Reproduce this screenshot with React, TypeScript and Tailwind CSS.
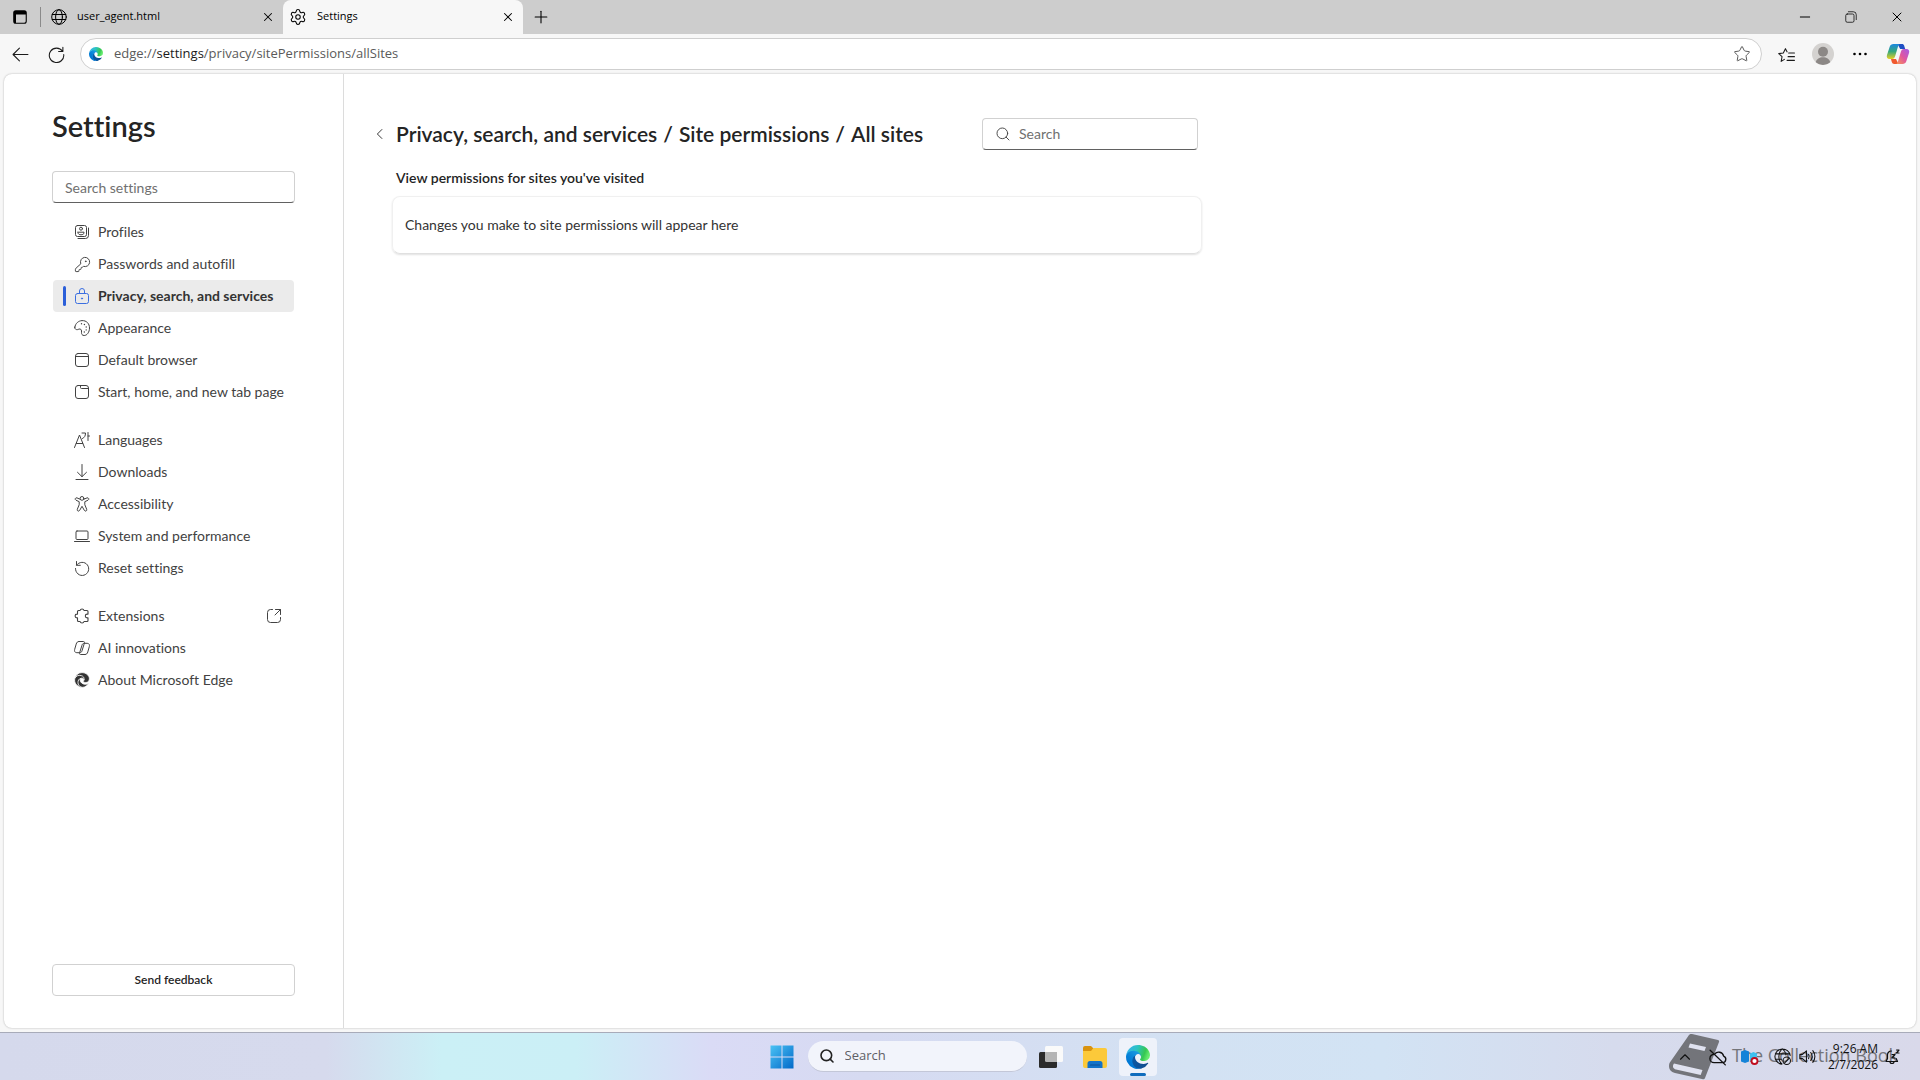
import { useState, type ReactNode } from "react";
import { KeyRound, Minus, Plus, Search, Settings, Star, X } from "lucide-react";
import clsx from "clsx";

type IconProps = { className?: string };

// 16px outline icon base
function Icon({ className, children }: IconProps & { children: ReactNode }) {
  return (
    <svg
      viewBox="0 0 16 16"
      fill="none"
      stroke="currentColor"
      strokeWidth={1}
      strokeLinecap="round"
      strokeLinejoin="round"
      className={clsx("shrink-0", className ?? "size-4")}
      aria-hidden="true"
    >
      {children}
    </svg>
  );
}

const ProfilesIcon = () => (
  <Icon>
    <rect x="1.5" y="1.5" width="11" height="11" rx="2" />
    <circle cx="7" cy="4.7" r="1.5" />
    <path d="M4 8.2h6v.6c0 1.3-1.3 2-3 2s-3-.7-3-2z" />
    <path d="M14.5 4v7.5a3 3 0 0 1-3 3H4" />
  </Icon>
);

const KeyIcon = () => <KeyRound className="size-[17px] shrink-0" strokeWidth={1.4} />;

const LockIcon = () => (
  <Icon>
    <rect x="1.5" y="5.5" width="13" height="10" rx="2" />
    <path d="M5.5 5.5V3a2.5 2.5 0 0 1 5 0v2.5" />
    <circle cx="8" cy="10.5" r=".6" fill="currentColor" />
  </Icon>
);

const PaletteIcon = () => (
  <Icon>
    <path d="M.8 7.2C1.5 3 4.7.8 8 .6c4.500-.2 7.500 3 7.500 7.400 0 4.200-2.500 7.500-5.300 7.500-2.200 0-2.800-1.500-2.700-3.200.2-2-.3-3.100-1.500-3.300-1.400-.2-2.300 1-3.500.6C1.200 9.300.6 8.400.8 7.200z" />
    <g fill="currentColor" stroke="none">
      <circle cx="7.5" cy="3.7" r=".7" />
      <circle cx="10.4" cy="4.5" r=".7" />
      <circle cx="12.2" cy="7" r=".7" />
      <circle cx="12.2" cy="9.9" r=".7" />
      <circle cx="10.3" cy="12" r=".7" />
    </g>
  </Icon>
);

const BrowserIcon = () => (
  <Icon>
    <rect x="1.5" y="1.5" width="13" height="13" rx="2.5" />
    <path d="M1.5 4.5h13" />
  </Icon>
);

const TabPageIcon = () => (
  <Icon>
    <rect x="1.5" y="1.5" width="13" height="13" rx="2.5" />
    <path d="M6.5 1.5v2a1 1 0 0 0 1 1h7" />
  </Icon>
);

const LanguagesIcon = () => (
  <Icon>
    <path d="M.5 15.5 5.5 3l5 12.500M2.300 11.500h6.400M8 1h3.500c0 3-1 4.500-3 5.500M14 .5v8M14 4h1.500" />
  </Icon>
);

const DownloadIcon = () => (
  <Icon>
    <path d="M8 .5v12M3.500 8.300 8 12.700l4.500-4.400M2 15.500h12" />
  </Icon>
);

const AccessibilityIcon = () => (
  <Icon>
    <circle cx="8" cy="2.4" r="1.9" />
    <path d="M6.200 3.300 3 1.900c-1.700-.6-2.500 1.600-1 2.300L5.200 5.700v3L3.300 13.300c-.6 1.700 1.600 2.600 2.400 1L8 10.300l2.300 4c.8 1.600 3 .7 2.400-1l-1.900-4.600v-3L14 4.200c1.500-.7.7-2.900-1-2.300L9.800 3.300" />
  </Icon>
);

const LaptopIcon = () => (
  <Icon>
    <rect x="2" y="3" width="12" height="8.5" rx="1" />
    <path d="M.5 13.500h15" />
  </Icon>
);

const ResetIcon = () => (
  <Icon>
    <path d="M2.500 1.500v3.800h3.800M2.600 5.200A6.600 6.600 0 1 1 1.500 8.500" />
  </Icon>
);

const PuzzleIcon = () => (
  <Icon>
    <path
      strokeWidth="1.1"
      d="M4.500 2.500h1.600a2 2 0 0 1 3.900 0H13a1 1 0 0 1 1 1v2.600h-.8a1.900 1.900 0 0 0 0 3.800h.8v2.600a1 1 0 0 1-1 1h-3a2 2 0 0 1-3.900 0H4.500a1 1 0 0 1-1-1V9.900H3a1.900 1.900 0 0 1 0-3.800h.5V3.500a1 1 0 0 1 1-1z"
    />
  </Icon>
);

const CopilotOutline = () => (
  <Icon>
    <path d="M5 1.500h4.500c.8 0 1.200.6 1 1.300L8 10.800c-.4 1.300-1 1.900-2.300 1.900H2.800C.8 12.700.2 11 .7 9.300l1.500-5.200C2.700 2.300 3.500 1.500 5 1.500z" />
    <path d="M11 14.500H6.500c-.8 0-1.200-.6-1-1.300L8 5.200c.4-1.300 1-1.900 2.300-1.900h2.900c2 0 2.600 1.700 2.100 3.400l-1.500 5.200c-.5 1.800-1.300 2.600-2.800 2.600z" />
  </Icon>
);

const OpenIcon = () => (
  <Icon className="mr-1 size-4">
    <path d="M6.500 1.500h-2a3 3 0 0 0-3 3v7a3 3 0 0 0 3 3h7a3 3 0 0 0 3-3v-2M9.500 1.500h5v5M14.500 1.500 9 7" />
  </Icon>
);

const EDGE_BASE =
  "M231 190.500c-3.400 1.800-6.900 3.400-10.500 4.700a101.700 101.700 0 0 1-35.900 6.400c-47.300 0-88.500-32.500-88.500-74.300a31.500 31.500 0 0 1 16.400-27.300c-42.800 1.800-53.800 46.400-53.800 72.500 0 73.900 68.100 81.400 82.800 81.400 7.900 0 19.800-2.300 27-4.500l1.300-.5a128.300 128.300 0 0 0 66.600-52.800 4 4 0 0 0-5.400-5.600z";
const EDGE_LEFT =
  "M105.700 241.400a79.200 79.200 0 0 1-22.700-21.300 80.700 80.700 0 0 1 29.500-120c3.200-1.500 8.500-4.100 15.600-4a32.400 32.400 0 0 1 25.700 13 31.900 31.900 0 0 1 6.300 18.700c0-.2 24.500-79.600-80-79.600-43.900 0-80 41.700-80 78.200a130.200 130.200 0 0 0 12.100 56 128 128 0 0 0 156.400 67.100 75.500 75.500 0 0 1-62.800-8z";
const EDGE_TOP =
  "M152.300 148.900c-.9 1-3.400 2.500-3.400 5.600 0 2.600 1.700 5.100 4.700 7.300 14.400 10 41.500 8.700 41.600 8.700a59.600 59.600 0 0 0 30.200-8.300 61.400 61.400 0 0 0 30.400-52.900c.3-22.400-8-37.300-11.300-43.900C223.500 23.800 177.700 0 128 0A128 128 0 0 0 0 126.200c.5-36.500 36.800-66 80-66 3.500 0 23.500.3 42 10a72.600 72.600 0 0 1 30.900 29.300c6.100 10.600 7.200 24.100 7.200 29.500s-2.700 13.300-7.800 19.900z";

const EdgeMono = () => (
  <svg viewBox="-10 -10 276 276" className="size-4 shrink-0" fill="#333" stroke="#fff" strokeWidth={14} aria-hidden="true">
    <path d={EDGE_TOP} />
    <path d={EDGE_LEFT} />
    <path d={EDGE_BASE} />
  </svg>
);

function EdgeLogo({ className, id }: { className: string; id: string }) {
  return (
    <svg viewBox="0 0 256 256" className={className} aria-hidden="true">
      <defs>
        <linearGradient id={`${id}-a`} x1="63" y1="84" x2="242" y2="84" gradientUnits="userSpaceOnUse">
          <stop offset="0" stopColor="#0c59a4" />
          <stop offset="1" stopColor="#114a8b" />
        </linearGradient>
        <linearGradient id={`${id}-b`} x1="157" y1="90" x2="46" y2="210" gradientUnits="userSpaceOnUse">
          <stop offset="0" stopColor="#1b9de2" />
          <stop offset=".67" stopColor="#0680d7" />
          <stop offset="1" stopColor="#0078d4" />
        </linearGradient>
        <linearGradient id={`${id}-c`} x1="20" y1="40" x2="235" y2="120" gradientUnits="userSpaceOnUse">
          <stop offset="0" stopColor="#35b4e8" />
          <stop offset=".4" stopColor="#2bc3c2" />
          <stop offset=".8" stopColor="#36c752" />
          <stop offset="1" stopColor="#66eb6e" />
        </linearGradient>
      </defs>
      <path d={EDGE_BASE} fill={`url(#${id}-a)`} />
      <path d={EDGE_LEFT} fill={`url(#${id}-b)`} />
      <path d={EDGE_TOP} fill={`url(#${id}-c)`} />
    </svg>
  );
}

function CopilotLogo() {
  return (
    <svg viewBox="0 0 24 24" className="size-6" aria-hidden="true">
      <defs>
        <linearGradient id="cp-l" x1="0" y1="0" x2="0" y2="1">
          <stop offset="0" stopColor="#1a86e0" />
          <stop offset=".5" stopColor="#35a87c" />
          <stop offset="1" stopColor="#e8d022" />
        </linearGradient>
        <linearGradient id="cp-r" x1="1" y1="0" x2="0" y2="1">
          <stop offset="0" stopColor="#a45be8" />
          <stop offset=".5" stopColor="#e0559f" />
          <stop offset="1" stopColor="#fa9a4f" />
        </linearGradient>
      </defs>
      <path d="M11.500 2H16c1.200 0 1.800.6 2.200 1.800l1 3.200h-5z" fill="#1f4fc4" />
      <path d="M12.500 22H8.200c-1.300 0-2-.7-2.400-2l-.8-3h5z" fill="#f0592f" />
      <path d="M7.500 2H14c-1 .3-1.500 1-1.900 2.300L9.200 14c-.6 2-1.400 3-3.200 3H3.500C1.200 17 .3 15.200 1 13L3.700 4.800C4.300 3 5.500 2 7.500 2z" fill="url(#cp-l)" />
      <path d="M16.500 22H10c1-.3 1.500-1 1.900-2.300L14.800 10c.6-2 1.400-3 3.200-3h2.500c2.300 0 3.200 1.800 2.500 4l-2.700 8.200c-.6 1.800-1.800 2.800-3.800 2.800z" fill="url(#cp-r)" />
    </svg>
  );
}

const GlobePaths = () => (
  <>
    <circle cx="8" cy="8" r="7.3" />
    <ellipse cx="8" cy="8" rx="3.4" ry="7.3" />
    <path d="M1.300 5.500h13.400M1.300 10.500h13.400" />
  </>
);

type NavItem = { label: string; icon: ReactNode; external?: boolean };

const NAV: NavItem[][] = [
  [
    { label: "Profiles", icon: <ProfilesIcon /> },
    { label: "Passwords and autofill", icon: <KeyIcon /> },
    { label: "Privacy, search, and services", icon: <LockIcon /> },
    { label: "Appearance", icon: <PaletteIcon /> },
    { label: "Default browser", icon: <BrowserIcon /> },
    { label: "Start, home, and new tab page", icon: <TabPageIcon /> },
  ],
  [
    { label: "Languages", icon: <LanguagesIcon /> },
    { label: "Downloads", icon: <DownloadIcon /> },
    { label: "Accessibility", icon: <AccessibilityIcon /> },
    { label: "System and performance", icon: <LaptopIcon /> },
    { label: "Reset settings", icon: <ResetIcon /> },
  ],
  [
    { label: "Extensions", icon: <PuzzleIcon />, external: true },
    { label: "AI innovations", icon: <CopilotOutline /> },
    { label: "About Microsoft Edge", icon: <EdgeMono /> },
  ],
];

function TabStrip() {
  return (
    <header className="flex h-[34px] shrink-0 items-center bg-[#cdcdcd] pb-px text-[11px] text-black">
      <button type="button" aria-label="Tab actions" className="flex w-10 justify-center">
        <svg viewBox="0 0 14 14" className="size-3.5" aria-hidden="true">
          <rect x=".75" y=".75" width="12.5" height="12.5" rx="2" fill="none" stroke="#000" strokeWidth="1.1" />
          <path d="M1 1h12v3.500H1zM1 4h2v9H1z" />
        </svg>
      </button>
      <div className="flex h-full w-[243px] items-center">
        <span className="h-5 w-px bg-[#8a8a8a]" />
        <Icon className="ml-2.5 size-4">
          <GlobePaths />
        </Icon>
        <span className="ml-2.5 flex-1">user_agent.html</span>
        <button type="button" aria-label="Close user_agent.html" className="mr-2">
          <X className="size-3.5" strokeWidth={1.8} />
        </button>
      </div>
      <div className="-mb-px flex h-[34px] w-[240px] items-center rounded-t-lg bg-[#f7f7f7] pb-px pl-1.5">
        <Settings className="size-[18px]" strokeWidth={1.4} />
        <span className="ml-2.5 flex-1">Settings</span>
        <button type="button" aria-label="Close Settings" className="mr-2">
          <X className="size-3.5" strokeWidth={1.8} />
        </button>
      </div>
      <button type="button" aria-label="New tab" className="ml-2">
        <Plus className="size-5" strokeWidth={1.3} />
      </button>
      <div className="ml-auto flex">
        <button type="button" aria-label="Minimize" className="flex w-[46px] justify-center">
          <Minus className="size-4" strokeWidth={1.5} />
        </button>
        <button type="button" aria-label="Restore" className="flex w-[46px] items-center justify-center">
          <Icon className="size-3">
            <rect x="1" y="4" width="11" height="11" rx="2" />
            <path d="M4.500 1H11a4 4 0 0 1 4 4v6.500" />
          </Icon>
        </button>
        <button type="button" aria-label="Close" className="flex w-[46px] justify-center">
          <X className="size-4" strokeWidth={1.5} />
        </button>
      </div>
    </header>
  );
}

function Toolbar() {
  return (
    <div className="flex h-10 shrink-0 items-center px-2.5 text-[#1b1b1b]">
      <button type="button" aria-label="Back" className="flex w-5 justify-center">
        <Icon className="size-[17px]">
          <path d="M15 8H1M7 2 1 8l6 6" />
        </Icon>
      </button>
      <button type="button" aria-label="Refresh" className="ml-4 flex w-5 justify-center">
        <Icon className="size-[17px]">
          <path d="M14 1.200v4h-4M13.700 5A6.800 6.800 0 1 0 14.800 8" />
        </Icon>
      </button>
      <div className="ml-3.5 flex h-8 flex-1 items-center rounded-full border border-[#cfcfcf] bg-white pr-2.5 pl-2">
        <EdgeLogo id="edge-url" className="size-3.5" />
        <div className="ml-[11px] flex-1 text-[13px] text-[#5a5a5a]">
          edge://<span className="text-[#1b1b1b]">settings</span>/privacy/sitePermissions/allSites
        </div>
        <button type="button" aria-label="Add this page to favorites">
          <Star className="size-[18px] text-[#555]" strokeWidth={1.3} />
        </button>
      </div>
      <div className="ml-3 flex items-center gap-3">
        <button type="button" aria-label="Favorites" className="ml-0.5 flex w-5 justify-center">
          <Icon className="size-[17px]">
            <path d="M6 12.600 3 14.500l.8-4.400L.7 7.200l4.300-.6L7 2.500l1.500 3M10 6.500h5.500M9.500 10h6M8.500 13.500h7" />
          </Icon>
        </button>
        <button type="button" aria-label="Profile" className="ml-1">
          <svg viewBox="0 0 22 22" className="size-[22px]" aria-hidden="true">
            <circle cx="11" cy="11" r="11" fill="#d4d2d0" />
            <circle cx="11" cy="8.7" r="5" fill="#8c8886" />
            <path d="M3.800 19.300C4.500 16 7.500 14.300 11 14.300s6.500 1.700 7.200 5A11 11 0 0 1 11 22a11 11 0 0 1-7.200-2.700z" fill="#8c8886" />
          </svg>
        </button>
        <button type="button" aria-label="Settings and more" className="ml-1 flex w-5 justify-center">
          <svg viewBox="0 0 16 4" className="h-1 w-4" aria-hidden="true">
            <circle cx="2.5" cy="2" r="1.3" />
            <circle cx="8" cy="2" r="1.3" />
            <circle cx="13.5" cy="2" r="1.3" />
          </svg>
        </button>
        <button type="button" aria-label="Copilot" className="ml-1">
          <CopilotLogo />
        </button>
      </div>
    </div>
  );
}

function Sidebar() {
  const [active, setActive] = useState("Privacy, search, and services");

  return (
    <aside className="flex w-[340px] shrink-0 flex-col border-r border-[#dcdcdc] px-12 pt-8 pb-8">
      <h1 className="text-[29px] leading-10 font-semibold text-[#242424]">Settings</h1>
      <input
        type="text"
        aria-label="Search settings"
        placeholder="Search settings"
        className="mt-[25px] h-8 shrink-0 rounded border border-[#d1d1d1] border-b-[#616161] px-3 text-sm outline-none placeholder:text-[#707070]"
      />
      <nav className="mx-px mt-[13px] flex flex-col gap-4">
        {NAV.map((group, i) => (
          <ul key={i}>
            {group.map((item) => {
              const selected = item.label === active;
              return (
                <li key={item.label}>
                  <button
                    type="button"
                    onClick={() => setActive(item.label)}
                    className={clsx(
                      "flex h-8 w-full items-center rounded px-2 text-left text-sm whitespace-nowrap",
                      selected ? "bg-[#ebebeb] font-bold text-[#333]" : "text-[#424242]"
                    )}
                  >
                    <span className={clsx("ml-0.5 h-5 w-[3px] rounded-full", selected && "bg-[#2b5fd9]")} />
                    <span className={clsx("ml-1.5 flex w-5 shrink-0 justify-center", selected && "text-[#3b6fe0]")}>
                      {item.icon}
                    </span>
                    <span className="ml-1.5 flex-1">{item.label}</span>
                    {item.external && <OpenIcon />}
                  </button>
                </li>
              );
            })}
          </ul>
        ))}
      </nav>
      <button type="button" className="mt-auto h-8 rounded border border-[#d1d1d1] text-xs font-semibold text-[#242424]">
        Send feedback
      </button>
    </aside>
  );
}

function AllSites() {
  return (
    <main className="flex-1 px-7 pt-11">
      <div className="max-w-[830px]">
        <div className="flex items-center">
          <button type="button" aria-label="Back" className="flex w-4 justify-center text-[#333]">
            <Icon className="size-3">
              <path d="m10.500 2-6 6 6 6" strokeWidth="1.3" />
            </Icon>
          </button>
          <h2 className="ml-2 flex gap-1.5 text-[21px] leading-7 font-semibold whitespace-nowrap text-[#242424]">
            <a href="#privacy">Privacy, search, and services</a>
            <span>/</span>
            <a href="#site-permissions">Site permissions</a>
            <span>/</span>
            <span>All sites</span>
          </h2>
          <label className="mr-1 ml-auto flex h-8 w-[216px] items-center gap-2 rounded border border-[#d1d1d1] border-b-[#616161] px-3">
            <Search className="size-4 shrink-0 text-[#424242]" strokeWidth={1.4} />
            <input
              type="text"
              aria-label="Search"
              placeholder="Search"
              className="w-full min-w-0 text-sm outline-none placeholder:text-[#707070]"
            />
          </label>
        </div>
        <h3 className="mt-[18px] ml-6 text-sm font-semibold text-[#242424]">View permissions for sites you've visited</h3>
        <div className="mt-2 ml-5 rounded-lg border border-[#f0f0f0] border-b-[#e0e0e0] px-3 py-[18px] text-sm text-[#333] shadow-[0_1px_2px_rgba(0,0,0,0.12)]">
          Changes you make to site permissions will appear here
        </div>
      </div>
    </main>
  );
}

function Watermark() {
  return (
    <div className="pointer-events-none absolute inset-y-0 right-[22px] flex items-center text-[#4a4a4a] opacity-70">
      <svg viewBox="0 0 52 46" className="h-[46px] w-[52px]" aria-hidden="true">
        <path
          d="M24 0 50 6c1 .3 1.300 1 1 2L37 44c-.4 1-1 1.400-2 1.200L7 39c-5-1-7-5-5.500-10L20 2.500C21 .8 22 -.4 24 0z"
          fill="currentColor"
        />
        <path d="M22 9.500 38 13l-1.500 4L20.500 13.500zM6 29.500 34.500 36l-1.800 5L8 35.500c-3-.7-4-3.500-2-6z" fill="#e4e6f2" />
      </svg>
      <span className="ml-3 pb-1 text-lg whitespace-nowrap">The Collection Book</span>
    </div>
  );
}

function Taskbar() {
  return (
    <footer className="relative grid h-12 shrink-0 grid-cols-[1fr_auto_1fr] items-center border-t border-[#a8abb9] bg-[linear-gradient(90deg,#d5d9ec_0%,#d6daed_17%,#cbf0f6_23%,#cbeff6_30%,#dadbf6_37%,#d6daf1_45%,#d3e2f3_62%,#d2e3f4_72%,#d6dbed_84%,#d9d9ea_100%)] pl-1.5">
      <Watermark />
      <div className="col-start-2 flex items-center">
        <button type="button" aria-label="Start">
          <svg viewBox="0 0 24 24" className="size-6" aria-hidden="true">
            <defs>
              <linearGradient id="win" x1="0" y1="0" x2="24" y2="24" gradientUnits="userSpaceOnUse">
                <stop offset="0" stopColor="#4cc4f5" />
                <stop offset="1" stopColor="#0067c8" />
              </linearGradient>
            </defs>
            <path d="M.5.500h11v11H.5zM12.500.500h11v11h-11zM.5 12.500h11v11H.5zM12.500 12.500h11v11h-11z" fill="url(#win)" />
          </svg>
        </button>
        <label className="ml-3.5 flex h-[31px] w-[219px] items-center gap-2.5 rounded-full border-b border-[#c3c7d8] bg-[#f2f4fb] px-[11px]">
          <Search className="size-4 shrink-0 text-[#222]" strokeWidth={2.4} />
          <input
            type="text"
            aria-label="Search Windows"
            placeholder="Search"
            className="w-full min-w-0 text-[13px] outline-none placeholder:text-[#5f5f66]"
          />
        </label>
        <button type="button" aria-label="Task view" className="ml-3">
          <svg viewBox="0 0 24 24" className="size-6" aria-hidden="true">
            <rect x="6" y="1" width="18" height="16" rx="1.5" fill="#fafafa" />
            <rect x="0" y="7" width="18" height="16" rx="1.5" fill="#2b2b2b" />
            <path d="M6 7h12v10H7.500A1.500 1.500 0 0 1 6 15.500z" fill="#b5b5b5" />
          </svg>
        </button>
        <button type="button" aria-label="File Explorer" className="ml-5">
          <svg viewBox="0 0 24 24" className="size-6" aria-hidden="true">
            <path d="M0 3a2 2 0 0 1 2-2h6l2.500 2.500L8 8H0z" fill="#d9930f" />
            <path d="M0 6h8l2.500-3H22a2 2 0 0 1 2 2v16a2 2 0 0 1-2 2H2a2 2 0 0 1-2-2z" fill="#fcc93a" />
            <path d="M4.500 23v-4.500A2.500 2.500 0 0 1 7 16h10a2.500 2.500 0 0 1 2.500 2.500V23z" fill="#1273c9" />
            <path d="M7.500 20h9" stroke="#0a4f94" strokeWidth="1.2" strokeLinecap="round" />
          </svg>
        </button>
        <button
          type="button"
          aria-label="Microsoft Edge"
          className="ml-3 flex h-[38px] w-[38px] flex-col items-center justify-between rounded bg-[#eef2fa] pt-[7px]"
        >
          <EdgeLogo id="edge-task" className="size-6" />
          <span className="h-[3px] w-4 rounded-full bg-[#0f6cbd]" />
        </button>
      </div>
      <div className="relative flex items-center justify-self-end pr-5 text-[#111]">
        <Icon className="size-3">
          <path d="m2 11 6-6 6 6" strokeWidth="1.5" />
        </Icon>
        <Icon className="ml-[18px] size-[18px]">
          <path d="M4.500 13h7.500a3 3 0 0 0 1-5.800A4.500 4.500 0 0 0 5 5.500C2 5.800.8 7.500.8 9.500S2.500 13 4.500 13zM1 2l13.500 13" strokeWidth="1.2" />
        </Icon>
        <svg viewBox="0 0 18 16" className="ml-[14px] h-4 w-[18px]" aria-hidden="true">
          <path d="M0 2.500 4 1l4 1.500v10L4 14l-4-1.500z" fill="#1583d8" />
          <path d="M9 4.500 12.500 3 16 4.500v7L12.500 13 9 11.500z" fill="#3fc0ee" />
          <circle cx="13.5" cy="12" r="3" fill="#fff" stroke="#c00d1e" strokeWidth="1.8" />
        </svg>
        <Icon className="ml-[15px] size-[17px]">
          <path d="M15.200 7A7.200 7.200 0 1 0 7 15.200M7.500 15.100C3.500 12 3.500 4 8 .8c2 1.500 3 3.500 3.200 5.700M1.300 5.500h13.400M1.300 10.500H7" />
          <circle cx="12" cy="12" r="3.5" />
          <path d="m9.600 14.400 4.800-4.800" />
        </Icon>
        <Icon className="ml-2 size-[17px]">
          <path d="M.8 6v4h2.500L7 13.300V2.700L3.300 6zM9 6c.8 1.200.8 2.800 0 4M11 4.200c1.700 2.200 1.700 5.400 0 7.600M13 2.500c2.600 3.200 2.600 7.800 0 11" />
        </Icon>
        <div className="ml-3 text-right text-xs leading-4">
          <div>9:26 AM</div>
          <div>2/7/2026</div>
        </div>
        <Icon className="ml-1.5 size-4">
          <path
            strokeWidth="1.2"
            d="M7.500 2C4.800 2 3.500 4 3.500 6v3.500L2 12.500h11.500l-1.300-3M6 12.500a2 2 0 0 0 4 0M8 5.500h3L8 9h3M12.500 1H15l-2.500 3H15"
          />
        </Icon>
      </div>
    </footer>
  );
}

export default function App() {
  return (
    <div className="flex min-h-screen flex-col bg-[#f7f7f7] font-['Open_Sans',sans-serif]">
      <TabStrip />
      <Toolbar />
      <div className="mx-1 mb-1 flex flex-1 rounded-lg bg-white font-[Lato,sans-serif] shadow-[0_0_2px_rgba(0,0,0,0.3)] [font-variant-ligatures:none]">
        <Sidebar />
        <AllSites />
      </div>
      <Taskbar />
    </div>
  );
}
